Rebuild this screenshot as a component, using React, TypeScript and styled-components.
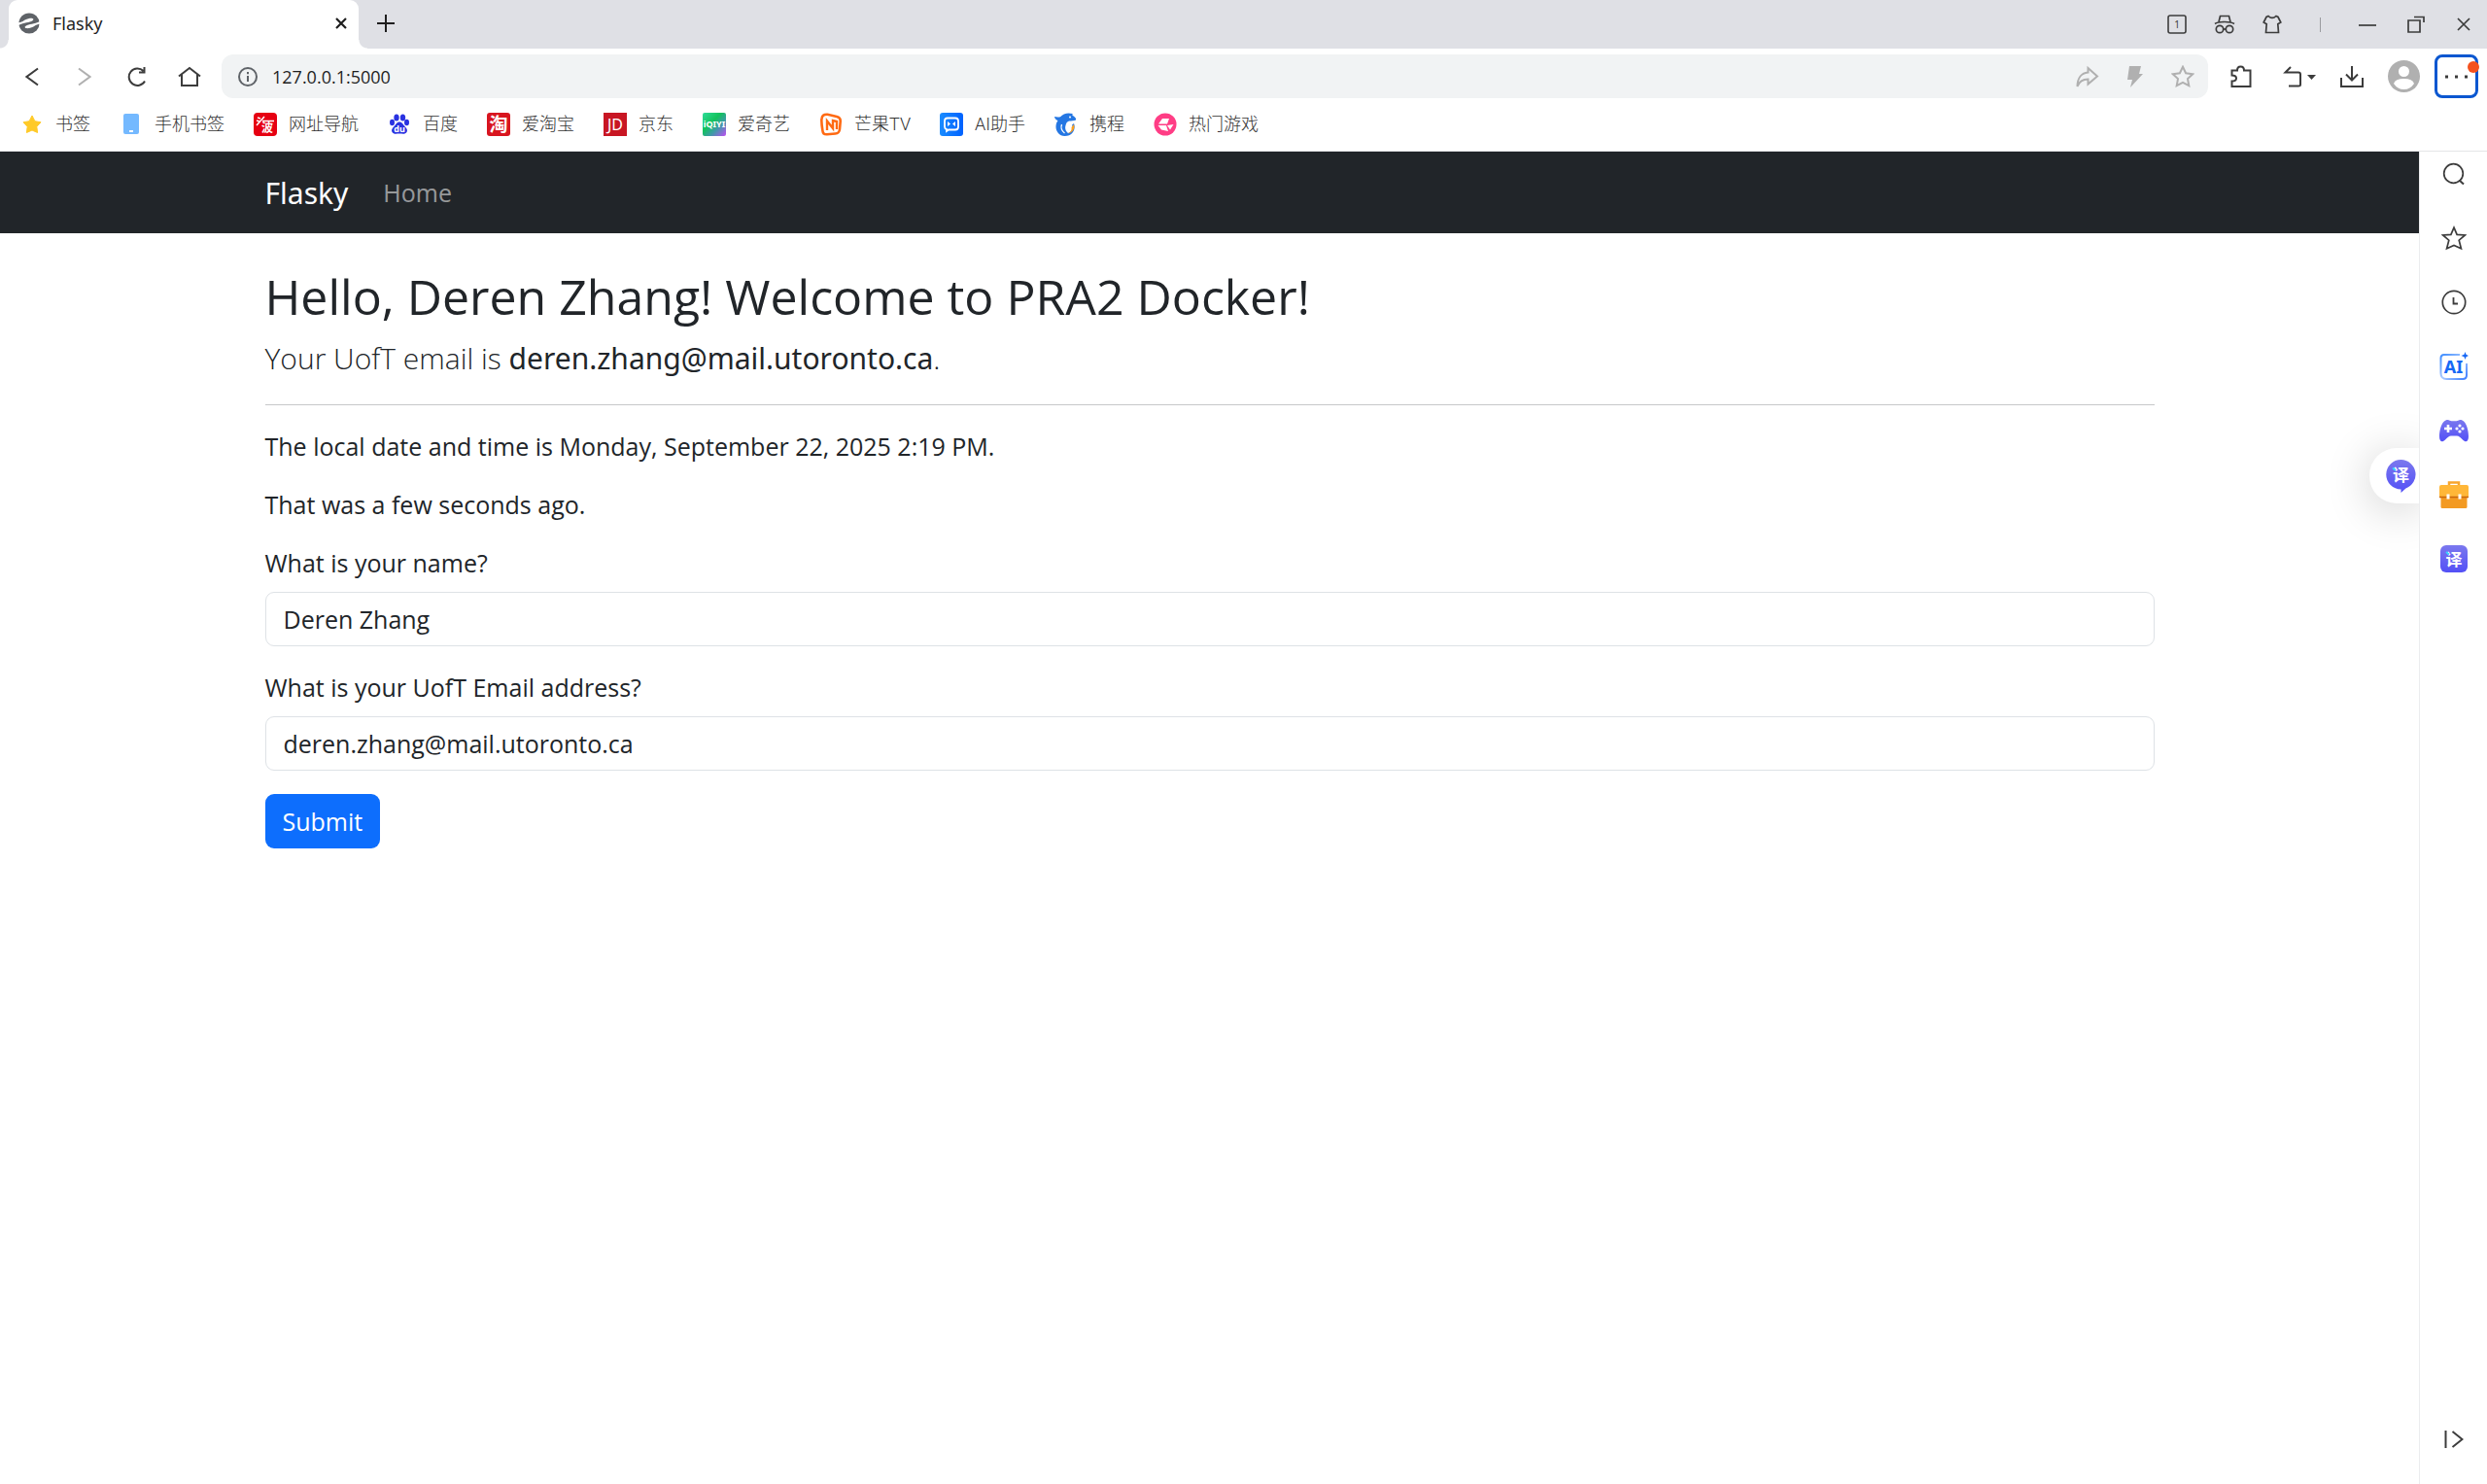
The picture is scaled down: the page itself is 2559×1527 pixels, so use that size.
import React, { useState } from "react";
import styled, { createGlobalStyle, css } from "styled-components";

const humanist = `"Open Sans", "Noto Sans", sans-serif`;
const wide = `"Noto Sans", "Noto Sans CJK SC", sans-serif`;
const bookmarkFont = `Roboto, "Noto Sans CJK SC", sans-serif`;

const GlobalStyle = createGlobalStyle`
  *, *::before, *::after { box-sizing: border-box; }
  body { margin: 0; background: #fff; color: #212529; font-family: ${wide}; }
  button, input { font-family: inherit; margin: 0; }
  svg { display: block; flex: none; }
`;

const Window = styled.div`
  min-height: 100vh;
  display: flex;
  flex-direction: column;
`;

/* ---------- title bar ---------- */

const TitleBar = styled.header`
  height: 50px;
  display: flex;
  align-items: stretch;
  padding-left: 9px;
  background: #dfe0e5;
`;

const Tab = styled.div`
  position: relative;
  width: 360px;
  display: flex;
  align-items: center;
  gap: 13px;
  padding: 0 8px 2px 10px;
  background: #fff;
  border-radius: 9px 9px 0 0;
  &::before,
  &::after {
    content: "";
    position: absolute;
    bottom: 0;
    width: 9px;
    height: 9px;
  }
  &::before {
    right: 100%;
    background: radial-gradient(circle at 0 0, transparent 8px, #fff 9px);
  }
  &::after {
    left: 100%;
    background: radial-gradient(circle at 100% 0, transparent 8px, #fff 9px);
  }
`;

const TabTitle = styled.span`
  flex: 1;
  font-size: 18px;
  line-height: 24px;
  color: #1f1f1f;
`;

const IconButton = styled.button<{ $w?: number; $h?: number; $color?: string }>`
  flex: none;
  width: ${(p) => p.$w ?? 48}px;
  height: ${(p) => p.$h ?? 48}px;
  display: flex;
  align-items: center;
  justify-content: center;
  padding: 0;
  border: 0;
  background: none;
  color: ${(p) => p.$color ?? "#3c3c3c"};
  cursor: pointer;
`;

const WindowControls = styled.div`
  margin-left: auto;
  display: flex;
  align-items: center;
`;

const Divider = styled.span`
  width: 50px;
  display: flex;
  justify-content: center;
  &::after {
    content: "";
    width: 1px;
    height: 15px;
    background: #9a9b9f;
  }
`;

/* ---------- toolbar ---------- */

const Toolbar = styled.div`
  display: flex;
  align-items: center;
  padding: 6px 9px 0 6px;
`;

const NavButtons = styled.nav`
  display: flex;
  width: 222px;
  flex: none;
`;

const AddressBar = styled.div`
  flex: 1;
  height: 45px;
  display: flex;
  align-items: center;
  gap: 15px;
  padding: 0 2px 0 17px;
  border-radius: 12px;
  background: #f1f3f4;
`;

const AddressInput = styled.input`
  flex: 1;
  min-width: 0;
  padding: 0;
  border: 0;
  outline: 0;
  background: none;
  color: #1f1f1f;
  font-family: ${humanist};
  font-size: 18px;
  line-height: 24px;
`;

const AddressActions = styled.div`
  display: flex;
`;

const ToolbarActions = styled.div`
  display: flex;
  align-items: center;
  padding-left: 7px;
`;

const MenuButton = styled.button`
  position: relative;
  width: 45px;
  height: 45px;
  display: flex;
  align-items: center;
  justify-content: center;
  padding: 0;
  border: 3px solid #0b57d0;
  border-radius: 8px;
  background: #fff;
`;

const Badge = styled.span`
  position: absolute;
  top: 4px;
  right: -4px;
  width: 12px;
  height: 12px;
  border-radius: 50%;
  background: #f4511e;
`;

/* ---------- bookmarks ---------- */

const Bookmarks = styled.nav`
  height: 55px;
  display: flex;
  align-items: center;
  gap: 30px;
  padding: 0 21px;
  border-bottom: 1px solid #e4e5e7;
`;

const Bookmark = styled.a`
  display: flex;
  align-items: center;
  gap: 12px;
  font-family: ${bookmarkFont};
  font-size: 18px;
  font-weight: 300;
  line-height: 24px;
  color: #333;
  text-decoration: none;
  white-space: nowrap;
`;

/* ---------- page ---------- */

const Body = styled.div`
  flex: 1;
  display: flex;
`;

const Page = styled.div`
  position: relative;
  flex: 1;
  min-width: 0;
  overflow: hidden;
  font-family: ${humanist};
`;

const container = css`
  width: 100%;
  max-width: 1980px;
  margin: 0 auto;
  padding: 0 18px;
`;

const SiteNav = styled.nav`
  background: #212529;
`;

const SiteNavInner = styled.div`
  ${container}
  height: 84px;
  display: flex;
  align-items: center;
  gap: 36px;
`;

const Brand = styled.a`
  font-family: ${wide};
  font-size: 30px;
  line-height: 45px;
  color: #fff;
  text-decoration: none;
`;

const NavLink = styled.a`
  font-size: 25px;
  line-height: 36px;
  color: rgba(255, 255, 255, 0.55);
  text-decoration: none;
`;

const Main = styled.main`
  ${container}
  padding-top: 36px;
  padding-bottom: 48px;
  font-size: 25px;
  line-height: 36px;
`;

const Title = styled.h1`
  margin: 0 0 12px;
  font-size: 50px;
  font-weight: 400;
  line-height: 58px;
`;

const Lead = styled.p`
  margin: 0 0 24px;
  font-size: 30px;
  font-weight: 300;
  line-height: 46px;
`;

const LeadStrong = styled.strong`
  font-family: ${wide};
  font-weight: 400;
`;

const Rule = styled.hr`
  margin: 24px 0;
  border: 0;
  border-top: 1px solid #c7c8c9;
`;

const Paragraph = styled.p`
  margin: 0 0 24px;
`;

const Field = styled.div`
  margin-bottom: 24px;
`;

const FieldLabel = styled.label`
  display: block;
  margin-bottom: 12px;
`;

const TextInput = styled.input`
  display: block;
  width: 100%;
  height: 56px;
  padding: 0 18px;
  border: 1px solid #dee2e6;
  border-radius: 9px;
  background: #fff;
  color: #212529;
  font-size: 25px;
  line-height: 36px;
`;

const SubmitButton = styled.button`
  height: 56px;
  padding: 0 18px;
  border: 0;
  border-radius: 9px;
  background: #0d6efd;
  color: #fff;
  font-size: 25px;
  line-height: 36px;
`;

const TranslatePill = styled.button`
  position: absolute;
  top: 305px;
  right: 0;
  width: 51px;
  height: 57px;
  display: flex;
  align-items: center;
  justify-content: flex-end;
  padding: 0 3px 0 0;
  border: 0;
  border-radius: 28px 0 0 28px;
  background: #fff;
  box-shadow: 0 6px 48px rgba(0, 0, 0, 0.2);
`;

/* ---------- side panel ---------- */

const SidePanel = styled.aside`
  flex: none;
  width: 70px;
  display: flex;
  flex-direction: column;
  align-items: center;
  gap: 20px;
  padding-bottom: 23px;
  border-left: 1px solid #ebecee;
`;

const SidePanelEnd = styled.div`
  margin-top: auto;
`;

/* ---------- icons ---------- */

type IconProps = { w?: number; h?: number; children: React.ReactNode };
const Icon = ({ w = 24, h = w, children }: IconProps) => (
  <svg width={w} height={h} viewBox={`0 0 ${w} ${h}`} fill="none" aria-hidden="true">
    {children}
  </svg>
);

const Stroke = ({ d, w = 2 }: { d: string; w?: number }) => (
  <path d={d} stroke="currentColor" strokeWidth={w} />
);

const STAR = "M12 1.8l3.1 6.5 7.1.9-5.2 4.9 1.3 7.1L12 17.8l-6.3 3.4L7 14.1 1.8 9.2l7.1-.9z";

const SiteIcon = () => (
  <Icon w={22}>
    <circle cx="11" cy="11" r="10.6" fill="#5f6368" />
    <path d="M0 10.200C5 9.800 6 6.800 11 6c4-.6 5.500.8 3.500 2.200C11 10.500 6 9.800 0 13z" fill="#fff" />
    <path d="M22 11.800c-5 .4-6 3.400-11 4.200-4 .6-5.500-.8-3.500-2.200C11 11.500 16 12.200 22 9z" fill="#fff" />
  </Icon>
);

const GlyphText = ({ x, y, size, weight = 700, fill = "#fff", children }: {
  x: number; y: number; size: number; weight?: number; fill?: string; children: string;
}) => (
  <text x={x} y={y} fontSize={size} fontWeight={weight} fill={fill} textAnchor="middle" fontFamily={wide}>
    {children}
  </text>
);

const bookmarks: { label: string; icon: React.ReactNode }[] = [
  {
    label: "书签",
    icon: <path d="M12 3l2.900 5.700 6.100 1.100-4.200 4.500.8 6.200-5.600-2.500-5.600 2.500.8-6.200L3 9.800l6.100-1.100z" fill="#ffca28" stroke="#ffca28" strokeLinejoin="round" />,
  },
  {
    label: "手机书签",
    icon: (
      <>
        <rect x="4" y="1" width="16" height="21" rx="2" fill="#74b9ff" />
        <path d="M10 19h4" stroke="#fff" strokeWidth="2" />
      </>
    ),
  },
  {
    label: "网址导航",
    icon: (
      <>
        <rect width="24" height="24" rx="4" fill="#e60012" />
        <path d="M4 5l3 1M3 8l3 1M3 13L11 4M9 8.500h12" stroke="#fff" strokeWidth="1.500" />
        <GlyphText x={14} y={20} size={12}>波</GlyphText>
      </>
    ),
  },
  {
    label: "百度",
    icon: (
      <g fill="#2932e1">
        <ellipse cx="9" cy="5" rx="2.700" ry="3.600" />
        <ellipse cx="15.500" cy="5" rx="2.700" ry="3.600" />
        <ellipse cx="4.500" cy="10" rx="2.500" ry="3.300" />
        <ellipse cx="19.500" cy="10" rx="2.500" ry="3.300" />
        <path d="M12 9.500c3 0 3.500 2.500 5.500 4.500 2.500 2.500 3 4 2 6-1.500 2.500-4.500 1.500-7.500 1.500s-6 1-7.500-1.500c-1-2-.5-3.500 2-6 2-2 2.500-4.500 5.500-4.500z" />
        <GlyphText x={12} y={20} size={9}>du</GlyphText>
      </g>
    ),
  },
  {
    label: "爱淘宝",
    icon: (
      <>
        <rect width="24" height="24" rx="3" fill="#d8151f" />
        <GlyphText x={12} y={19} size={19}>淘</GlyphText>
      </>
    ),
  },
  {
    label: "京东",
    icon: (
      <>
        <rect width="24" height="24" fill="#c81623" />
        <GlyphText x={12} y={18} size={16} weight={400}>JD</GlyphText>
      </>
    ),
  },
  {
    label: "爱奇艺",
    icon: (
      <>
        <defs>
          <linearGradient id="qiyi" x1="0" y1="0" x2="1" y2="1">
            <stop offset="0" stopColor="#2fdc9a" />
            <stop offset=".4" stopColor="#12c25c" />
            <stop offset=".65" stopColor="#3e9aa8" />
            <stop offset="1" stopColor="#c04df5" />
          </linearGradient>
        </defs>
        <rect width="24" height="24" rx="2" fill="url(#qiyi)" />
        <GlyphText x={12} y={15} size={9}>iQIYI</GlyphText>
      </>
    ),
  },
  {
    label: "芒果TV",
    icon: (
      <>
        <path d="M2.500 6c.5-3.500 2.500-4.500 6-4.200l9.500 2.200c3 .7 4 2 3.700 5l-.7 8c-.3 3-1.500 4.300-4.500 4.500l-8.500.8c-3 .2-4.300-1-4.600-4C2.800 14.500 2 9 2.500 6z" stroke="#ff6a13" strokeWidth="2.600" />
        <path d="M8 18V8.500l6 7.500V8l4 1v8" stroke="#ff6a13" strokeWidth="2.400" />
      </>
    ),
  },
  {
    label: "AI助手",
    icon: (
      <>
        <defs>
          <linearGradient id="assist" x1="0" y1="0" x2="1" y2="0">
            <stop offset="0" stopColor="#1a8cff" />
            <stop offset="1" stopColor="#0062ff" />
          </linearGradient>
        </defs>
        <rect width="24" height="24" rx="3" fill="url(#assist)" />
        <path d="M8 5.500h8q3 0 3 3v6q0 3-3 3H9l-2 1.500v-2q-2-.5-2-2.500v-6q0-3 3-3z" stroke="#fff" strokeWidth="1.800" />
        <path d="M8 9l3 2.500L8 14zM16 9l-3 2.500 3 2.500z" fill="#fff" />
      </>
    ),
  },
  {
    label: "携程",
    icon: (
      <>
        <path d="M0 4c2 .5 4 .6 6 .2C9 1 13-.5 19 1c-1 .8-1 1.300 0 2 2.500 1.500 3.500 3 3 4.500-2 1-4.500.8-7 1-2 .6-3 2.200-3.500 4.500-1 3.500 0 6 2.500 8 3-1 4.500-3 4.500-6 0-1.500 0-2-.5-2.500l2-1.500c2 5-.5 13-9.500 13C5 24 1.500 19 1.500 15 1.300 11.500 2.500 9.500 3.500 8 1.500 7.500.3 6 0 4z" fill="#2577e3" />
        <path d="M20 12c1.500 4.500-1.500 8.500-6 9.500 3-2 4-3.500 3.500-6.500z" fill="#ff9f1a" />
        <path d="M7.500 12c-1.500 4 .5 7 3 9" stroke="#fff" strokeWidth="1.300" />
        <circle cx="16" cy="4.500" r="1" fill="#fff" />
      </>
    ),
  },
  {
    label: "热门游戏",
    icon: (
      <>
        <circle cx="12" cy="12" r="11.500" fill="#ff3d85" />
        <path d="M9 6h7l-2 5.500H5zM4.500 13h8.500l2 6-7-1.500zM14 13l6.500-1-3.500 5.500z" fill="#fff" />
      </>
    ),
  },
];

const indigo = (id: string) => (
  <defs>
    <linearGradient id={id} x1="0" y1="0" x2="0" y2="1">
      <stop offset="0" stopColor="#7b78ee" />
      <stop offset="1" stopColor="#5350f6" />
    </linearGradient>
  </defs>
);

const sideItems: { name: string; icon: React.ReactNode }[] = [
  {
    name: "Search",
    icon: (
      <Icon w={26}>
        <circle cx="12.500" cy="12.500" r="9.800" stroke="currentColor" strokeWidth="1.700" />
        <Stroke d="M18.500 19.500l4.500 4" w={2} />
      </Icon>
    ),
  },
  {
    name: "Favourites",
    icon: (
      <Icon w={26}>
        <Stroke d="M13 2.200l3.100 7.200 8.200.6-6.100 5.200 2.200 8.500-7.400-3.200-7.400 3.200 2.200-8.500L1.700 10l8.200-.6z" w={1.7} />
      </Icon>
    ),
  },
  {
    name: "History",
    icon: (
      <Icon w={26}>
        <circle cx="13" cy="13" r="11.700" stroke="currentColor" strokeWidth="1.700" />
        <Stroke d="M12.500 8v6.500H17" w={1.8} />
      </Icon>
    ),
  },
  {
    name: "AI",
    icon: (
      <Icon w={30}>
        <defs>
          <linearGradient id="aiFrame" x1="0" y1="0" x2="1" y2="1">
            <stop offset="0" stopColor="#3d8bff" />
            <stop offset=".5" stopColor="#a9caff" />
            <stop offset="1" stopColor="#3d7eff" />
          </linearGradient>
        </defs>
        <path d="M21 3H5Q1.500 3 1.500 6.500V22Q1.500 28 7.500 28H24q4 0 4-4V12" stroke="url(#aiFrame)" strokeWidth="2" />
        <GlyphText x={14.5} y={22} size={18} fill="#1768f5">AI</GlyphText>
        <path d="M26.500 0l1 2.800L30 4l-2.500 1.200-1 2.800-1-2.800-3-1.200 3-1.200z" fill="#1768f5" />
      </Icon>
    ),
  },
  {
    name: "Games",
    icon: (
      <Icon w={30} h={24}>
        {indigo("pad")}
        <path d="M6.500 1.500c3-1.500 4.500.8 6 .8h5c1.500 0 3-2.300 6-.8C28 3.500 30 12 30 18c0 5-2.500 7-6 3.500-2-2.200-4-4-6-4h-6c-2 0-4 1.800-6 4C2.500 25 0 23 0 18 0 12 2 3.500 6.500 1.500z" fill="url(#pad)" />
        <path d="M9 6v8M5 10h8" stroke="#fff" strokeWidth="2.600" />
        <g fill="#fff">
          <circle cx="21" cy="7" r="1.600" />
          <circle cx="21" cy="13" r="1.600" />
          <circle cx="18" cy="10" r="1.600" />
          <circle cx="24" cy="10" r="1.600" />
        </g>
      </Icon>
    ),
  },
  {
    name: "Toolbox",
    icon: (
      <Icon w={30}>
        <path d="M10 6V2.500h10V6" stroke="#f7a52c" strokeWidth="2.500" />
        <rect x="1.500" y="13" width="27" height="16" rx="1.500" fill="#f39a22" />
        <path d="M2 5h26q2 0 2 2v10H0V7q0-2 2-2z" fill="#ffb738" />
        <path d="M0 17.500h30" stroke="#c9670c" strokeWidth="1.500" />
        <path d="M9 14.500v5M21 14.500v5" stroke="#fff" strokeWidth="3" />
      </Icon>
    ),
  },
  {
    name: "Translate",
    icon: (
      <Icon w={28}>
        {indigo("tile")}
        <rect width="28" height="28" rx="6" fill="url(#tile)" />
        <GlyphText x={14} y={20.500} size={17}>译</GlyphText>
        <path d="M6 7l3 2.500" stroke="#39d5ff" strokeWidth="2" />
      </Icon>
    ),
  },
];

/* ---------- app ---------- */

export default function App() {
  const [name, setName] = useState("Deren Zhang");
  const [email, setEmail] = useState("deren.zhang@mail.utoronto.ca");
  const [address, setAddress] = useState("127.0.0.1:5000");

  return (
    <>
      <GlobalStyle />
      <Window>
        <TitleBar>
          <Tab>
            <SiteIcon />
            <TabTitle>Flasky</TabTitle>
            <IconButton $w={20} $h={24} $color="#1f1f1f" aria-label="Close tab">
              <Icon w={12}><Stroke d="M1 1l10 10M11 1L1 11" w={2.2} /></Icon>
            </IconButton>
          </Tab>
          <IconButton $w={56} $color="#1f1f1f" aria-label="New tab">
            <Icon w={18}><Stroke d="M9 0v18M0 9h18" w={2} /></Icon>
          </IconButton>
          <WindowControls>
            <IconButton $w={49} aria-label="Windows">
              <Icon w={20}>
                <rect x="1" y="1" width="18" height="18" rx="2" stroke="currentColor" strokeWidth="1.600" />
                <GlyphText x={10} y={14} size={10} weight={400} fill="#3c3c3c">1</GlyphText>
              </Icon>
            </IconButton>
            <IconButton $w={49} aria-label="Private window">
              <Icon w={22} h={20}>
                <Stroke d="M5 7.500L6.500 1.500h9L17 7.500M1 9.500Q4 7.500 11 7.500t10 2" w={1.7} />
                <circle cx="6" cy="15" r="3.700" stroke="currentColor" strokeWidth="1.700" />
                <circle cx="16" cy="15" r="3.700" stroke="currentColor" strokeWidth="1.700" />
                <Stroke d="M9.500 15h3" w={1.7} />
              </Icon>
            </IconButton>
            <IconButton $w={49} aria-label="Skins">
              <Icon w={20}>
                <Stroke d="M6 1.500Q10 5.500 14 1.500L16 2.500l2.800 5.500-3 1.800L16.500 18.500h-13L4.200 9.800 1.200 8 4 2.500z" w={1.7} />
              </Icon>
            </IconButton>
            <Divider />
            <IconButton $w={48} aria-label="Minimize">
              <Icon w={18}><Stroke d="M0 10h18" w={1.7} /></Icon>
            </IconButton>
            <IconButton $w={51} aria-label="Restore">
              <Icon w={18}><Stroke d="M1 5h12v12H1zM7 1.500h10V7" w={1.7} /></Icon>
            </IconButton>
            <IconButton $w={48} aria-label="Close">
              <Icon w={14}><Stroke d="M1 1l12 12M13 1L1 13" w={1.7} /></Icon>
            </IconButton>
          </WindowControls>
        </TitleBar>

        <Toolbar>
          <NavButtons>
            <IconButton $w={54} $h={45} aria-label="Back">
              <Icon w={14} h={20}><Stroke d="M13 1.500L1.500 10 13 18.500" w={2} /></Icon>
            </IconButton>
            <IconButton $w={54} $h={45} $color="#b0b0b0" aria-label="Forward">
              <Icon w={14} h={20}><Stroke d="M1 1.500L12.500 10 1 18.500" w={2} /></Icon>
            </IconButton>
            <IconButton $w={54} $h={45} aria-label="Reload">
              <Icon w={20}>
                <Stroke d="M18 14.500A8.700 8.700 0 1 1 16.500 4M17.500 0v5.500H12" w={2} />
              </Icon>
            </IconButton>
            <IconButton $w={54} $h={45} aria-label="Home">
              <Icon w={24} h={22}>
                <Stroke d="M1 10.500L12 2l11 8.500M4 8.500V20h16V8.500" w={2} />
              </Icon>
            </IconButton>
          </NavButtons>
          <AddressBar>
            <Icon w={20}>
              <circle cx="10" cy="10" r="9" stroke="#5f6368" strokeWidth="2" />
              <path d="M10 9v6M10 5v2.200" stroke="#5f6368" strokeWidth="2" />
            </Icon>
            <AddressInput aria-label="Address" value={address} onChange={(e) => setAddress(e.target.value)} />
            <AddressActions>
              <IconButton $w={49} $h={45} $color="#b0b0b0" aria-label="Share">
                <Icon w={24}>
                  <Stroke d="M12.500 3l9.500 8.500-9.500 8v-5C7 14.500 3.500 16.500 1.500 22 1.500 13 6 8 12.500 7.500z" w={2} />
                </Icon>
              </IconButton>
              <IconButton $w={49} $h={45} $color="#b0b0b0" aria-label="Speed mode">
                <Icon w={16} h={22}>
                  <path d="M2 0h12l-2 8h4L3 22l2-8H0z" fill="currentColor" />
                </Icon>
              </IconButton>
              <IconButton $w={49} $h={45} $color="#b0b0b0" aria-label="Add bookmark">
                <Icon w={24}><Stroke d={STAR} w={2} /></Icon>
              </IconButton>
            </AddressActions>
          </AddressBar>
          <ToolbarActions>
            <IconButton $w={54} $h={45} aria-label="Extensions">
              <Icon w={22} h={24}>
                <Stroke d="M1.500 5.500H7C7 3 8.500 1.500 10.500 1.500S14 3 14 5.500h6.500V22h-19v-5.500c3 0 4.500-1 4.500-3s-1.500-3-4.500-3z" w={2} />
              </Icon>
            </IconButton>
            <IconButton $w={66} $h={45} aria-label="Undo close">
              <Icon w={34} h={22}>
                <Stroke d="M8 1L2.500 6.500H16q2 0 2 2V19q0 1.500-2 1.500H6" w={2} />
                <path d="M25 9h9l-4.500 5z" fill="currentColor" />
              </Icon>
            </IconButton>
            <IconButton $w={42} $h={45} aria-label="Downloads">
              <Icon w={24} h={22}>
                <Stroke d="M1 12v9h22v-9M12 0v14M6 8.500l6 6 6-6" w={2} />
              </Icon>
            </IconButton>
            <IconButton $w={64} $h={45} aria-label="Profile">
              <Icon w={33}>
                <circle cx="16.500" cy="16.500" r="16.500" fill="#b0b0b0" />
                <circle cx="16.500" cy="11.500" r="5.500" fill="#fff" />
                <path d="M6 24q1.500-5 10.500-5T27 24q-4 6-10.500 6T6 24z" fill="#fff" />
              </Icon>
            </IconButton>
            <MenuButton aria-label="Menu">
              <Icon w={24} h={4}>
                <path d="M0 .5h3v3H0zM10 .5h3v3h-3zM20 .5h3v3h-3z" fill="#3c3c3c" />
              </Icon>
              <Badge />
            </MenuButton>
          </ToolbarActions>
        </Toolbar>

        <Bookmarks>
          {bookmarks.map((b) => (
            <Bookmark key={b.label} href="#">
              <Icon>{b.icon}</Icon>
              {b.label}
            </Bookmark>
          ))}
        </Bookmarks>

        <Body>
          <Page>
            <SiteNav>
              <SiteNavInner>
                <Brand href="#">Flasky</Brand>
                <NavLink href="#">Home</NavLink>
              </SiteNavInner>
            </SiteNav>
            <Main>
              <Title>Hello, Deren Zhang! Welcome to PRA2 Docker!</Title>
              <Lead>
                Your UofT email is <LeadStrong>deren.zhang@mail.utoronto.ca</LeadStrong>.
              </Lead>
              <Rule />
              <Paragraph>The local date and time is Monday, September 22, 2025 2:19 PM.</Paragraph>
              <Paragraph>That was a few seconds ago.</Paragraph>
              <form onSubmit={(e) => e.preventDefault()}>
                <Field>
                  <FieldLabel htmlFor="name">What is your name?</FieldLabel>
                  <TextInput id="name" value={name} onChange={(e) => setName(e.target.value)} />
                </Field>
                <Field>
                  <FieldLabel htmlFor="email">What is your UofT Email address?</FieldLabel>
                  <TextInput id="email" value={email} onChange={(e) => setEmail(e.target.value)} />
                </Field>
                <SubmitButton type="submit">Submit</SubmitButton>
              </form>
            </Main>
            <TranslatePill aria-label="Translate page">
              <Icon w={31} h={34}>
                {indigo("bubble")}
                <path d="M15.500 0a15.200 15.200 0 0 1 5 29.500L15.500 34v-3.500a15.200 15.200 0 0 1 0-30.500z" fill="url(#bubble)" />
                <GlyphText x={15.500} y={22} size={17}>译</GlyphText>
                <path d="M7 8.500l3 2.500" stroke="#39d5ff" strokeWidth="2" />
              </Icon>
            </TranslatePill>
          </Page>
          <SidePanel>
            {sideItems.map((item) => (
              <IconButton key={item.name} $h={46} aria-label={item.name}>
                {item.icon}
              </IconButton>
            ))}
            <SidePanelEnd>
              <IconButton $h={46} aria-label="Collapse">
                <Icon w={20}>
                  <Stroke d="M1.500 1v18M8.500 2l10 8-10 8" w={2} />
                </Icon>
              </IconButton>
            </SidePanelEnd>
          </SidePanel>
        </Body>
      </Window>
    </>
  );
}
